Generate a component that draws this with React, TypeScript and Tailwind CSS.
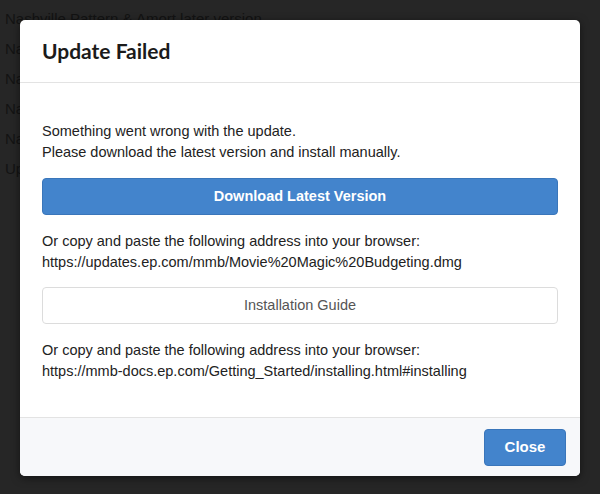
export default function App() {
  const bgLines = [
    "Nashville Pattern & Amort later version",
    "Nashville Pattern",
    "Nashville Amort",
    "Nashville Summary",
    "Nashville Detail",
    "Update Settings",
  ];

  return (
    <div className="relative h-[494px] w-[600px] overflow-hidden bg-[#262626] font-['Liberation_Sans',Arial,sans-serif]">
      {/* page behind the overlay */}
      <div className="flex flex-col pl-[5px] pt-[4px] text-[15px] leading-[30px] text-[#131313]">
        {bgLines.map((line, i) => (
          <div key={i}>{line}</div>
        ))}
      </div>

      <div className="absolute inset-0 p-[20px]">
        <div className="flex h-[456px] w-[560px] flex-col overflow-hidden rounded-[5px] bg-white shadow-[0_2px_8px_rgba(0,0,0,0.5)]">
          <div className="flex h-[63px] shrink-0 items-center border-b border-[#e3e3e3] px-[22px]">
            <h1 className="font-['Lato',sans-serif] text-[21px] font-bold text-[#1b1b1b]">
              Update Failed
            </h1>
          </div>

          <div className="flex flex-1 flex-col px-[22px] pt-[38px] text-[14.5px] leading-[21px] text-[#222]">
            <p>
              Something went wrong with the update.
              <br />
              Please download the latest version and install manually.
            </p>

            <button className="mt-[15px] h-[37px] w-full rounded-[4px] border border-[#3a76ba] bg-[#4384cc] text-[14.5px] font-bold text-white">
              Download Latest Version
            </button>

            <p className="mt-[16px]">
              Or copy and paste the following address into your browser:
              <br />
              https://updates.ep.com/mmb/Movie%20Magic%20Budgeting.dmg
            </p>

            <button className="mt-[14px] h-[37px] w-full rounded-[4px] border border-[#dcdcdc] bg-white text-[14.5px] text-[#555]">
              Installation Guide
            </button>

            <p className="mt-[16px]">
              Or copy and paste the following address into your browser:
              <br />
              https://mmb-docs.ep.com/Getting_Started/installing.html#installing
            </p>
          </div>

          <div className="flex h-[59px] shrink-0 items-center justify-end border-t border-[#e3e3e3] bg-[#f7f8fa] pr-[14px]">
            <button className="h-[37px] w-[82px] rounded-[4px] border border-[#3a76ba] bg-[#4384cc] text-[15px] font-bold text-white">
              Close
            </button>
          </div>
        </div>
      </div>
    </div>
  );
}
